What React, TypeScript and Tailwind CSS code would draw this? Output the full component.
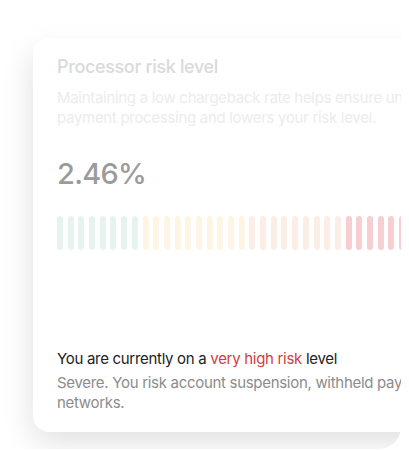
import React from 'react';

const bars: string[] = Array.from({ length: 36 }, (_, i) => {
  if (i < 8) return 'bg-[#e7f3ee]';
  if (i < 18) return 'bg-[#fdf6e5]';
  if (i < 27) return 'bg-[#fbeee7]';
  return 'bg-[#f5cfd2]';
});

export default function App() {
  return (
    <div className="relative h-[450px] w-[409px] bg-white font-['Inter','Noto_Sans',sans-serif]">
      <div className="relative h-[449px] w-[401px] overflow-hidden rounded-b-[22px]">
        <div className="pl-[33px] pt-[38px]">
          <div className="h-[394px] w-[460px] rounded-[16px] bg-white px-6 pt-4 shadow-[0_10px_32px_rgba(0,0,0,0.13)]">
            <h2 className="text-[18px] leading-[26px] font-medium tracking-[-0.02em] text-[#dadada]">
              Processor risk level
            </h2>
            <p className="mt-2 whitespace-nowrap text-[15px] leading-5 tracking-[-0.02em] text-[#ececec]">
              Maintaining a low chargeback rate helps ensure uninterrupted
              <br />
              payment processing and lowers your risk level.
            </p>
            <div className="mt-[28px] text-[29px] leading-9 font-medium tracking-[-0.025em] text-[#9b9b9b]">
              2.46%
            </div>
            <div className="mt-[24px] flex gap-[4.7px]">
              {bars.map((c, i) => (
                <div key={i} className={`h-[34px] w-[6px] shrink-0 rounded-[3px] ${c}`} />
              ))}
            </div>
            <p className="mt-[99px] text-[15px] leading-5 tracking-[-0.02em] text-[#222222]">
              You are currently on a <span className="text-[#d63c3f]">very high risk</span> level
            </p>
            <p className="mt-1 whitespace-nowrap text-[15px] leading-5 tracking-[-0.02em] text-[#8c8c8c]">
              Severe. You risk account suspension, withheld payments and fines by card
              <br />
              networks.
            </p>
          </div>
        </div>
        <div className="pointer-events-none absolute inset-x-0 top-0 h-[60px] bg-gradient-to-b from-white via-white/70 to-transparent" />
      </div>
    </div>
  );
}
